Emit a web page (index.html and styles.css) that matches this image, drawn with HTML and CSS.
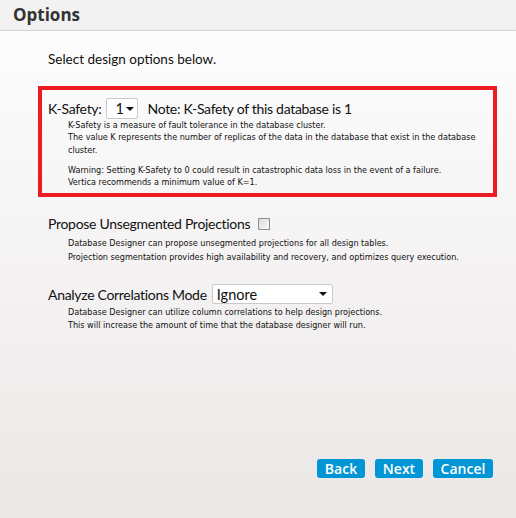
FILE: index.html
```html
<!DOCTYPE html>
<html lang="en">

<head>
    <meta charset="UTF-8">
    <meta name="viewport" content="width=device-width, initial-scale=1.0">
    <title>Options</title>
    <link rel="stylesheet" href="styles.css">
</head>

<body>
    <div class="page">
        <div class="header">Options</div>

        <div class="content">
            <p class="intro">Select design options below.</p>

            <div class="ksafety">
                <div class="row">
                    <span class="label">K-Safety:</span>
                    <div class="select small">
                        <span>1</span>
                        <svg width="8" height="4" viewBox="0 0 8 4"><path d="M0 0 L8 0 L4 4 Z" fill="#111"/></svg>
                    </div>
                    <span class="note">Note: K-Safety of this database is 1</span>
                </div>
                <div class="desc">
                    <p>K-Safety is a measure of fault tolerance in the database cluster.<br>
                        The value K represents the number of replicas of the data in the database that exist in the database cluster.</p>
                    <p>Warning: Setting K-Safety to 0 could result in catastrophic data loss in the event of a failure.<br>
                        Vertica recommends a minimum value of K=1.</p>
                </div>
            </div>

            <div class="option">
                <div class="row">
                    <span class="label">Propose Unsegmented Projections</span>
                    <span class="checkbox"></span>
                </div>
                <div class="desc spaced">
                    <p>Database Designer can propose unsegmented projections for all design tables.<br>
                        Projection segmentation provides high availability and recovery, and optimizes query execution.</p>
                </div>
            </div>

            <div class="option">
                <div class="row">
                    <span class="label">Analyze Correlations Mode</span>
                    <div class="select wide">
                        <span>Ignore</span>
                        <svg width="8" height="4" viewBox="0 0 8 4"><path d="M0 0 L8 0 L4 4 Z" fill="#111"/></svg>
                    </div>
                </div>
                <div class="desc">
                    <p>Database Designer can utilize column correlations to help design projections.<br>
                        This will increase the amount of time that the database designer will run.</p>
                </div>
            </div>
        </div>

        <div class="buttons">
            <button>Back</button>
            <button>Next</button>
            <button>Cancel</button>
        </div>
    </div>
</body>

</html>
```

FILE: styles.css
```css
body {
    margin: 0;
    font-family: Lato, "Liberation Sans", sans-serif;
    color: #111;
}

.page {
    height: 518px;
    display: flex;
    flex-direction: column;
    background: linear-gradient(#fefefe, #ebe7e7);
}

.header {
    height: 31px;
    line-height: 30px;
    padding-left: 13px;
    background-color: #f2f2f2;
    border-bottom: 1px solid #d2d2d2;
    font-family: "Open Sans", sans-serif;
    font-size: 17px;
    font-weight: bold;
    color: #333;
    box-sizing: border-box;
}

.content {
    padding-left: 38px;
    padding-right: 19px;
}

.intro {
    margin: 20px 0 19px 10px;
    font-size: 13.5px;
}

p {
    margin: 0;
}

.ksafety {
    border: 4px solid #ed1c24;
    padding: 8px 6px 6px 6px;
    height: 111px;
    box-sizing: border-box;
}

.ksafety .desc {
    line-height: 12.3px;
}

.row {
    display: flex;
    align-items: center;
    gap: 5px;
}

.label,
.note {
    font-size: 14px;
    letter-spacing: -0.3px;
}

.note {
    margin-left: 4px;
}

.option {
    margin-top: 18px;
    padding-left: 10px;
}

.option + .option {
    margin-top: 20px;
}

.option + .option .desc {
    margin-top: 2px;
}

.desc {
    padding-left: 20px;
    font-family: "DejaVu Sans Condensed", "DejaVu Sans", sans-serif;
    font-size: 9px;
    line-height: 12.5px;
}

.desc p + p {
    margin-top: 8px;
}

.desc.spaced {
    margin-top: 5px;
    line-height: 13.5px;
}

.select {
    display: flex;
    align-items: center;
    justify-content: space-between;
    background-color: #fff;
    border: 1px solid #c9c9c9;
    border-radius: 2px;
    font-size: 14.5px;
    padding: 0 3px 0 8px;
    box-sizing: border-box;
    height: 21px;
}

.select.small {
    width: 32px;
}

.select.wide {
    width: 121px;
    height: 20px;
    padding: 0 5px 0 4px;
}

.checkbox {
    width: 12px;
    height: 12px;
    border: 1px solid #8f8f8f;
    background: linear-gradient(135deg, #dcdcdc, #f8f8f8);
    box-sizing: border-box;
    margin-left: 3px;
}

.buttons {
    margin-top: auto;
    display: flex;
    justify-content: flex-end;
    gap: 10px;
    padding: 0 23px 40px 0;
}

button {
    background-color: #0096d6;
    color: #fff;
    border: none;
    border-radius: 3px;
    height: 19px;
    font-family: "Open Sans", "Liberation Sans", sans-serif;
    font-size: 14px;
    font-weight: 600;
    padding: 0;
    line-height: 19px;
    width: 48px;
}

button:last-child {
    width: 60px;
}
```
